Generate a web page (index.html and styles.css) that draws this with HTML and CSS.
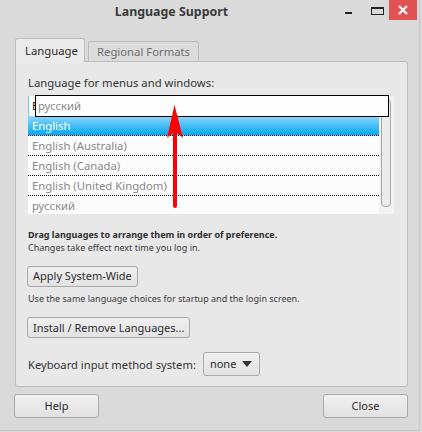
FILE: index.html
```html
<!DOCTYPE html>
<html>
<head>
<meta charset="utf-8">
<link rel="stylesheet" href="styles.css">
</head>
<body>
<div class="window">
  <div class="titlebar">
    <div class="title">Language Support</div>
    <div class="controls">
      <span class="ctl-min"></span>
      <span class="ctl-max"></span>
      <span class="ctl-close"><svg width="12" height="12" viewBox="0 0 12 12"><path d="M2 2 L10 10 M10 2 L2 10" stroke="#fff" stroke-width="2.2"/></svg></span>
    </div>
  </div>
  <div class="main">
    <div class="tabs">
      <div class="tab active">Language</div>
      <div class="tab">Regional Formats</div>
    </div>
    <div class="panel">
      <div class="label">Language for menus and windows:</div>
      <div class="list">
        <div class="rows">
          <div class="row first">English</div>
          <div class="row selected dotted">English</div>
          <div class="row dotted">English (Australia)</div>
          <div class="row dotted">English (Canada)</div>
          <div class="row dotted">English (United Kingdom)</div>
          <div class="row">русский</div>
        </div>
        <div class="scrollcol"><div class="scrollbar"></div></div>
        <div class="drag">русский</div>
        <svg class="arrow" width="24" height="104" viewBox="0 0 24 104">
          <line x1="12" y1="22" x2="12" y2="101" stroke="#f00" stroke-width="4" stroke-linecap="round"/>
          <polygon points="11.5,0 20,33 12,26 4,33" fill="#f00"/>
        </svg>
      </div>
      <div class="note bold">Drag languages to arrange them in order of preference.</div>
      <div class="note">Changes take effect next time you log in.</div>
      <div class="btnrow first-btn"><button class="btn">Apply System-Wide</button></div>
      <div class="note use">Use the same language choices for startup and the login screen.</div>
      <div class="btnrow second-btn"><button class="btn">Install / Remove Languages...</button></div>
      <div class="kbd">
        <span>Keyboard input method system:</span>
        <button class="btn combo">none <span class="caret"></span></button>
      </div>
    </div>
    <div class="footer">
      <button class="btn wide">Help</button>
      <button class="btn wide">Close</button>
    </div>
  </div>
</div>
</body>
</html>
```

FILE: styles.css
```css
html, body {
  margin: 0;
  padding: 0;
}
body {
  width: 422px;
  height: 432px;
  overflow: hidden;
  background: #dadada;
  font-family: "Noto Sans", "Open Sans", sans-serif;
  color: #333;
}
.window {
  width: 419px;
  height: 430px;
  border-right: 1px solid #c4c4c4;
  border-bottom: 1px solid #c4c4c4;
  display: flex;
  flex-direction: column;
}
.titlebar {
  height: 26px;
  display: flex;
  align-items: flex-start;
}
.title {
  flex: 1;
  text-align: center;
  font-weight: bold;
  font-size: 12.4px;
  line-height: 24px;
  color: #3a3a3a;
  padding-left: 4px;
}
.controls {
  display: flex;
  align-items: flex-start;
  width: 80px;
}
.ctl-min {
  width: 7px;
  height: 2px;
  background: #222;
  margin: 12px 0 0 6px;
}
.ctl-max {
  width: 11px;
  height: 5px;
  border: 1.5px solid #222;
  border-top-width: 2px;
  margin: 7px 0 0 19px;
}
.ctl-close {
  width: 28px;
  height: 20px;
  background: #e25252;
  margin-left: 5px;
  display: flex;
  align-items: center;
  justify-content: center;
}
.main {
  padding: 12px 11px 0 15px;
  display: flex;
  flex-direction: column;
}
.tabs {
  display: flex;
  align-items: flex-end;
  height: 23px;
}
.tab {
  height: 20px;
  box-sizing: border-box;
  border: 1px solid #bdbdbd;
  border-bottom: none;
  border-radius: 3px 3px 0 0;
  padding: 0 8px;
  font-size: 11.3px;
  line-height: 19px;
  color: #6e6e6e;
  background: #dcdcdc;
  margin-left: 3px;
  width: 111px;
  white-space: nowrap;
}
.tab.active {
  margin-left: 0;
  width: 70px;
  height: 24px;
  margin-bottom: -1px;
  position: relative;
  z-index: 1;
  background: #ebebeb;
  color: #2c2c2c;
  line-height: 23px;
  padding-left: 9px;
}
.panel {
  height: 326px;
  box-sizing: border-box;
  border: 1px solid #bdbdbd;
  border-radius: 0 3px 3px 3px;
  background: #e8e8e8;
  padding: 12px 12px 0 12px;
}
.label {
  font-size: 11.3px;
  line-height: 17px;
  color: #333;
}
.list {
  position: relative;
  margin-top: 5px;
  width: 366px;
  height: 118px;
  background: #fcfcfc;
  display: flex;
  overflow: visible;
}
.rows {
  width: 351px;
  height: 118px;
  overflow: hidden;
}
.row {
  height: 20px;
  box-sizing: border-box;
  padding-left: 4px;
  font-size: 11.3px;
  line-height: 20px;
  color: #8a8a8a;
}
.row.first {
  border-left: 1px solid #7cc5f0;
  padding-left: 3px;
  color: #222;
}
.row.dotted {
  border-bottom: 1px dotted #111;
  line-height: 19px;
}
.row.selected {
  background: linear-gradient(#8fd4fb, #00a9f1);
  color: #fff;
}
.scrollcol {
  width: 15px;
  background: #f2f2f2;
  display: flex;
  justify-content: flex-start;
  padding-top: 3px;
}
.scrollbar {
  width: 8px;
  height: 106px;
  border: 1px solid #a6a6a6;
  border-radius: 4px;
  background: #ececec;
  margin-left: 2px;
}
.drag {
  position: absolute;
  left: 7px;
  top: -1px;
  width: 350px;
  height: 20px;
  border: 1px solid #000;
  background: #fdfdfd;
  font-size: 11.3px;
  line-height: 20px;
  padding-left: 2px;
  color: #8a8a8a;
  box-sizing: content-box;
}
.arrow {
  position: absolute;
  left: 135px;
  top: 9px;
}
.note {
  font-size: 9px;
  line-height: 13px;
  color: #3a3a3a;
}
.note.bold {
  font-weight: bold;
  margin-top: 14px;
  color: #2e2e2e;
}
.btnrow.first-btn {
  margin-top: 9px;
}
.btnrow.second-btn {
  margin-top: 10px;
}
.note.use {
  margin-top: 5px;
}
.btn {
  font-family: "Noto Sans", "Open Sans", sans-serif;
  font-size: 11px;
  color: #2c2c2c;
  height: 21px;
  padding: 0 5px;
  margin-left: -1px;
  border: 1px solid #a9a9a9;
  border-radius: 3px;
  background: linear-gradient(#f0f0f0, #e2e2e2);
  line-height: 18px;
}
.kbd {
  margin-top: 14px;
  display: flex;
  align-items: center;
  font-size: 11.2px;
  color: #333;
}
.btn.combo {
  height: 24px;
  margin-left: 7px;
  width: 57px;
  padding: 0 6px;
  text-align: left;
  display: flex;
  align-items: center;
}
.caret {
  display: inline-block;
  width: 0;
  height: 0;
  border-left: 5px solid transparent;
  border-right: 5px solid transparent;
  border-top: 6px solid #333;
  margin-left: 6px;
}
.footer {
  display: flex;
  justify-content: space-between;
  margin-top: 7px;
  padding-left: 0;
}
.footer .btn {
  width: 85px;
  height: 24px;
  margin-left: -1px;
}
```
